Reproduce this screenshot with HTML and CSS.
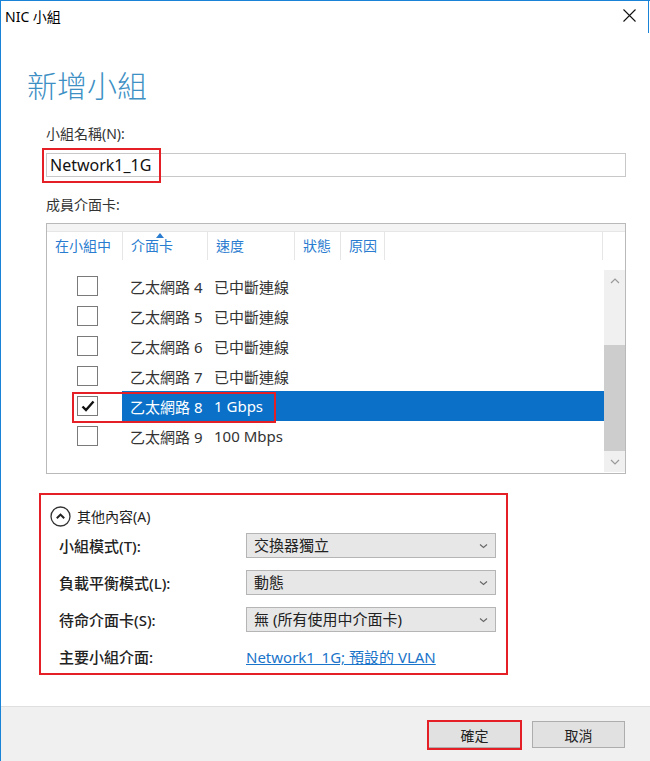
FILE: index.html
```html
<!DOCTYPE html>
<html lang="zh-Hant">
<head>
    <meta charset="UTF-8">
    <title>NIC 小組</title>
    <link rel="stylesheet" href="styles.css">
</head>
<body>
    <div class="window">
        <div class="titlebar">
            <span class="title">NIC 小組</span>
            <svg class="close" width="13" height="13" viewBox="0 0 13 13"><path d="M0.5 0.5L12.5 12.5M12.5 0.5L0.5 12.5" stroke="#111" stroke-width="1.1" fill="none"/></svg>
        </div>

        <div class="content">
            <h1 class="heading">新增小組</h1>

            <div class="label">小組名稱(N):</div>
            <div class="name-field">
                <div class="input-box">Network1_1G</div>
                <div class="mark mark-name"></div>
            </div>

            <div class="label">成員介面卡:</div>
            <div class="listbox">
                <div class="list-top"></div>
                <div class="list-head">
                    <div class="col c1">在小組中</div>
                    <div class="col c2">介面卡<span class="sort"></span></div>
                    <div class="col c3">速度</div>
                    <div class="col c4">狀態</div>
                    <div class="col c5">原因</div>
                    <div class="col c6"></div>
                </div>
                <div class="list-body">
                    <div class="rows">
                        <div class="row"><span class="check"><span class="box"></span></span><span class="cell name">乙太網路 4</span><span class="cell">已中斷連線</span></div>
                        <div class="row"><span class="check"><span class="box"></span></span><span class="cell name">乙太網路 5</span><span class="cell">已中斷連線</span></div>
                        <div class="row"><span class="check"><span class="box"></span></span><span class="cell name">乙太網路 6</span><span class="cell">已中斷連線</span></div>
                        <div class="row"><span class="check"><span class="box"></span></span><span class="cell name">乙太網路 7</span><span class="cell">已中斷連線</span></div>
                        <div class="row selected">
                            <span class="check"><span class="box"><svg width="16" height="14" viewBox="0 0 16 14"><path d="M2.5 7.5L6 11L13.5 2.5" stroke="#111" stroke-width="2.4" fill="none"/></svg></span></span>
                            <span class="sel-area"><span class="cell name">乙太網路 8</span><span class="cell">1 Gbps</span></span>
                            <div class="mark mark-row"></div>
                        </div>
                        <div class="row"><span class="check"><span class="box"></span></span><span class="cell name">乙太網路 9</span><span class="cell">100 Mbps</span></div>
                    </div>
                    <div class="scrollbar">
                        <div class="sb-btn"><svg width="10" height="6" viewBox="0 0 10 6"><path d="M1 5L5 1L9 5" stroke="#9a9a9a" stroke-width="1.2" fill="none"/></svg></div>
                        <div class="sb-track"><div class="sb-thumb"></div></div>
                        <div class="sb-btn"><svg width="10" height="6" viewBox="0 0 10 6"><path d="M1 1L5 5L9 1" stroke="#9a9a9a" stroke-width="1.2" fill="none"/></svg></div>
                    </div>
                </div>
            </div>

            <div class="extra">
                <div class="mark mark-extra"></div>
                <div class="toggle">
                    <svg width="21" height="21" viewBox="0 0 21 21"><circle cx="10.5" cy="10.5" r="9.5" stroke="#333" stroke-width="1.3" fill="none"/><path d="M6.8 12.3L10.5 8.6L14.2 12.3" stroke="#222" stroke-width="2" fill="none"/></svg>
                    <span>其他內容(A)</span>
                </div>
                <div class="form">
                    <div class="f-label">小組模式(T):</div>
                    <div class="select">交換器獨立<svg width="9" height="6" viewBox="0 0 9 6"><path d="M1 1.5L4.5 4.5L8 1.5" stroke="#666" stroke-width="1.1" fill="none"/></svg></div>
                    <div class="f-label">負載平衡模式(L):</div>
                    <div class="select">動態<svg width="9" height="6" viewBox="0 0 9 6"><path d="M1 1.5L4.5 4.5L8 1.5" stroke="#666" stroke-width="1.1" fill="none"/></svg></div>
                    <div class="f-label">待命介面卡(S):</div>
                    <div class="select">無 (所有使用中介面卡)<svg width="9" height="6" viewBox="0 0 9 6"><path d="M1 1.5L4.5 4.5L8 1.5" stroke="#666" stroke-width="1.1" fill="none"/></svg></div>
                    <div class="f-label">主要小組介面:</div>
                    <div class="link">Network1_1G; 預設的 VLAN</div>
                </div>
            </div>
        </div>

        <div class="footer">
            <button class="btn ok">確定<span class="mark mark-ok"></span></button>
            <button class="btn">取消</button>
        </div>
    </div>
</body>
</html>
```

FILE: styles.css
```css
body {
    margin: 0;
    font-family: "Noto Sans", "Noto Sans CJK TC", sans-serif;
    color: #222;
    background: #ffffff;
}
.window {
    width: 650px;
    height: 761px;
    box-sizing: border-box;
    border-top: 1px solid #1883d7;
    border-left: 1px solid #1883d7;
    display: flex;
    flex-direction: column;
    position: relative;
}
.window::after {
    content: "";
    position: absolute;
    right: 1px;
    top: 0;
    width: 1px;
    height: 32px;
    background: #1883d7;
}
.titlebar {
    height: 31px;
    display: flex;
    align-items: center;
    justify-content: space-between;
    padding: 0 14px 0 4px;
}
.title {
    font-size: 14px;
    color: #000;
    margin-top: -2px;
}
.close {
    margin-top: -2px;
}
.content {
    flex: 1;
    padding: 0 24px 0 45px;
}
.heading {
    margin: 34px 0 0 -19px;
    font-size: 30px;
    line-height: 40px;
    font-weight: 300;
    color: #3d8fc4;
}
.label {
    font-size: 14px;
    line-height: 20px;
    color: #333;
    margin-top: 18px;
}
.name-field {
    position: relative;
    margin-top: 9px;
    margin-bottom: 15px;
}
.input-box {
    height: 24px;
    box-sizing: border-box;
    border: 1px solid #c8c8c8;
    padding-left: 3px;
    font-size: 16px;
    line-height: 22px;
    color: #111;
}
.mark {
    position: absolute;
    border: 2px solid #e51f26;
    box-sizing: border-box;
    pointer-events: none;
}
.mark-name {
    left: -4px;
    top: -5px;
    width: 119px;
    height: 35px;
}
.listbox {
    margin-top: 8px;
    border: 1px solid #b9b9b9;
    height: 251px;
    box-sizing: border-box;
}
.list-top {
    height: 7px;
    background: #f4f4f4;
    border-bottom: 1px solid #e6e6e6;
}
.list-head {
    display: flex;
    height: 28px;
    font-size: 14px;
    color: #2a7cd0;
}
.col {
    position: relative;
    padding-left: 8px;
    line-height: 28px;
    box-sizing: border-box;
    border-right: 1px solid #e6e6e6;
}
.c1 { width: 76px; }
.c2 { width: 85px; }
.c3 { width: 87px; }
.c4 { width: 46px; }
.c5 { width: 44px; }
.c6 { width: 218px; }
.sort {
    position: absolute;
    left: 33px;
    top: 1px;
    border-left: 4px solid transparent;
    border-right: 4px solid transparent;
    border-bottom: 5px solid #2a7cd0;
}
.list-body {
    display: flex;
    margin-top: 11px;
}
.rows {
    flex: 1;
}
.row {
    position: relative;
    display: flex;
    align-items: center;
    height: 30px;
    font-size: 15px;
    color: #333;
}
.check {
    width: 75px;
    display: flex;
    padding-left: 30px;
    box-sizing: border-box;
}
.box {
    width: 21px;
    height: 20px;
    box-sizing: border-box;
    border: 1px solid #7a7a7a;
    background: #fff;
    display: flex;
    align-items: center;
    justify-content: center;
}
.cell {
    padding-left: 8px;
}
.cell.name {
    width: 84px;
    box-sizing: border-box;
}
.sel-area {
    flex: 1;
    align-self: stretch;
    display: flex;
    align-items: center;
    background: #0a70c8;
    color: #fff;
}
.mark-row {
    left: 25px;
    top: 1px;
    width: 204px;
    height: 31px;
}
.scrollbar {
    width: 21px;
    height: 202px;
    margin-top: -1px;
    background: #f0f0f0;
    display: flex;
    flex-direction: column;
}
.sb-btn {
    height: 21px;
    display: flex;
    align-items: center;
    justify-content: center;
}
.sb-track {
    flex: 1;
    display: flex;
    flex-direction: column;
    justify-content: flex-end;
}
.sb-thumb {
    height: 106px;
    background: #cdcdcd;
}
.extra {
    position: relative;
    margin-top: 19px;
    padding: 12px 0 0 4px;
}
.mark-extra {
    left: -7px;
    top: 0;
    width: 469px;
    height: 182px;
}
.toggle {
    display: flex;
    align-items: center;
    gap: 6px;
    font-size: 14px;
    color: #222;
    height: 22px;
}
.form {
    display: grid;
    grid-template-columns: 187px 250px;
    grid-auto-rows: 37px;
    align-items: center;
    margin-top: 0;
    padding-left: 9px;
}
.f-label {
    font-size: 15px;
    color: #222;
    font-weight: 500;
}
.select {
    height: 25px;
    box-sizing: border-box;
    border: 1px solid #b5b5b5;
    background: #e7e7e7;
    font-size: 15px;
    line-height: 23px;
    padding: 0 7px 0 7px;
    display: flex;
    justify-content: space-between;
    align-items: center;
    color: #222;
}
.link {
    font-size: 15px;
    color: #1a74c9;
    text-decoration: underline;
}
.footer {
    height: 55px;
    box-sizing: border-box;
    border-top: 1px solid #dfdfdf;
    background: #f0f0f0;
    display: flex;
    justify-content: flex-end;
    gap: 11px;
    padding: 14px 25px 0 0;
}
.btn {
    position: relative;
    width: 93px;
    height: 27px;
    border: 1px solid #adadad;
    background: #e1e1e1;
    font-family: "Noto Sans", "Noto Sans CJK TC", sans-serif;
    font-size: 14px;
    color: #222;
    padding: 0;
}
.mark-ok {
    left: -2px;
    top: -2px;
    right: -2px;
    bottom: -3px;
}
```
